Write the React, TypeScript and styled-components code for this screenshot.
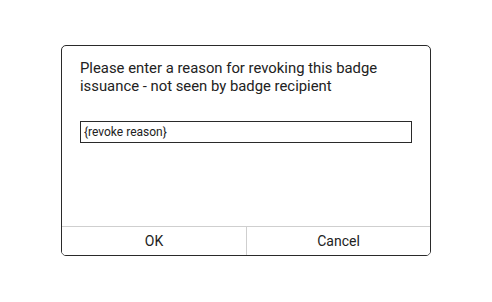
import styled, { createGlobalStyle } from 'styled-components'

const GlobalStyle = createGlobalStyle`
  html, body {
    margin: 0;
    padding: 0;
    background: #fff;
  }
  body {
    font-family: Roboto, 'Liberation Sans', sans-serif;
  }
`

const Page = styled.div`
  padding: 45px 0 0 61px;
`

const Dialog = styled.div`
  box-sizing: border-box;
  width: 370px;
  height: 211px;
  border: 1px solid #2a2a2a;
  border-radius: 5px;
  display: flex;
  flex-direction: column;
  overflow: hidden;
`

const Body = styled.div`
  flex: 1;
  padding: 13px 18px 0 18px;
`

const Message = styled.p`
  margin: 0;
  font-size: 14.85px;
  line-height: 18px;
  color: #222;
`

const ReasonInput = styled.input`
  box-sizing: border-box;
  display: block;
  width: 332px;
  height: 22px;
  margin-top: 26px;
  padding: 0 3px;
  border: 1px solid #2a2a2a;
  border-radius: 0;
  font-family: Roboto, 'Liberation Sans', sans-serif;
  font-size: 12px;
  color: #222;
  outline: none;

  &::placeholder {
    color: #222;
  }
`

const Actions = styled.div`
  display: grid;
  grid-template-columns: 1fr 1fr;
  border-top: 1px solid #cfcfcf;
  height: 28px;
`

const ActionButton = styled.button<{ $divider?: boolean }>`
  border: none;
  border-left: ${(p) => (p.$divider ? '1px solid #cfcfcf' : 'none')};
  background: #fff;
  font-family: Roboto, 'Liberation Sans', sans-serif;
  font-size: 14px;
  color: #222;
  padding: 0;
  cursor: pointer;
`

const App = () => (
  <>
    <GlobalStyle />
    <Page>
      <Dialog>
        <Body>
          <Message>
            Please enter a reason for revoking this badge issuance - not seen by badge recipient
          </Message>
          <ReasonInput placeholder="{revoke reason}" />
        </Body>
        <Actions>
          <ActionButton>OK</ActionButton>
          <ActionButton $divider>Cancel</ActionButton>
        </Actions>
      </Dialog>
    </Page>
  </>
)

export default App
